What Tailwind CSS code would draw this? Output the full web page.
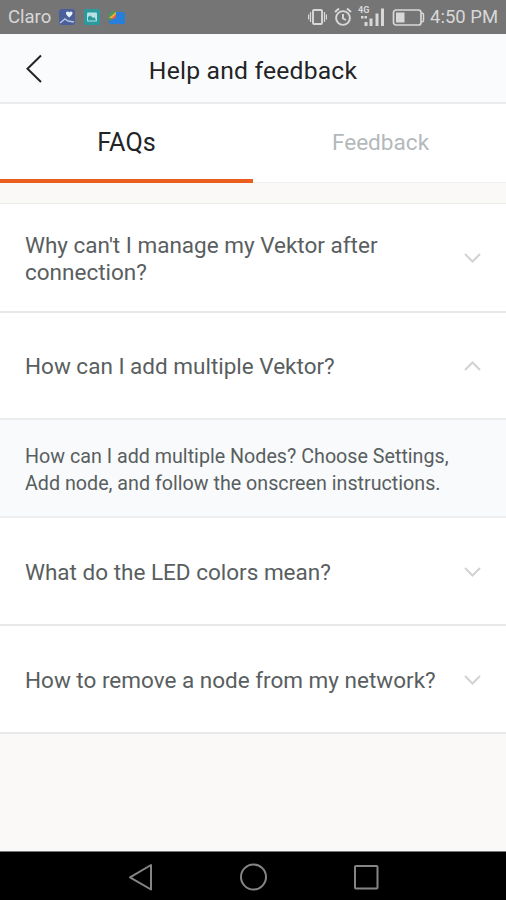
<!DOCTYPE html>
<html lang="en">
<head>
<meta charset="utf-8">
<title>Help and feedback</title>
<script src="https://cdn.jsdelivr.net/npm/@tailwindcss/browser@4"></script>
</head>
<body class="w-[506px] h-[900px] overflow-hidden flex flex-col bg-[#faf9f7] font-['Roboto',sans-serif] text-[#595e60]">
  <div class="h-[34px] shrink-0 bg-[#757575] flex items-center pl-2 pr-2 text-[#d8d8d8]">
    <span class="text-[18.5px] leading-[34px] w-[51px] whitespace-nowrap">Claro</span>
    <svg class="w-4 h-4" viewBox="0 0 16 16"><rect width="16" height="16" rx="3" fill="#4a5f9b"/><path d="M7 3.500q2-2 3.200 0 1.500-2 3.300 0 .5 2-3.300 5Q6.500 5.500 7 3.500z" fill="#e7f4fa"/><path d="M1 14l5-4 3 2 6 1" fill="none" stroke="#b6c3df" stroke-width="1.500"/></svg>
    <svg class="w-4 h-4 ml-[9px]" viewBox="0 0 16 16"><rect width="16" height="16" rx="2" fill="#2a9a9d"/><rect x="3" y="3.500" width="10" height="9" rx="1" fill="#b9e1e3"/><path d="M4 11.500V8l2.500-1.500L9 9l1.500-1 1.500 3.500z" fill="#2a9a9d"/></svg>
    <svg class="w-[17px] h-4 ml-[8px]" viewBox="0 0 17 16"><rect x="1" y="3" width="16" height="12" rx="1.500" fill="#287fd9"/><path d="M0 8a7 7 0 0 1 8-6v5l-6 5z" fill="#4f9a50"/><path d="M1 9l7-6v3L4 9z" fill="#f0b63d"/><path d="M3 10l5-5v3L6 10z" fill="#e75d49"/></svg>
    <div class="grow"></div>
    <svg class="w-[20px] h-[18px]" viewBox="0 0 20 18" fill="none" stroke="#d8d8d8" stroke-width="1.900"><rect x="6" y="2" width="9" height="14" rx="1"/><path d="M3.500 4v10M17.500 4v10M1.600 6.500v5M19.400 6.500v5" stroke-width="1.200"/></svg>
    <svg class="w-[18px] h-[20px] ml-[7px]" viewBox="0 0 18 20" fill="none" stroke="#d8d8d8" stroke-width="1.900"><circle cx="9" cy="11" r="6.900"/><path d="M9 7v4.500l3 1.500M1 5l4-3.500M17 5l-4-3.500"/></svg>
    <div class="relative w-[28px] h-[24px] ml-[5px]">
      <span class="absolute left-[1px] top-0 text-[9px] leading-[10px] font-bold">4G</span>
      <svg class="absolute inset-0" width="28" height="24" viewBox="0 0 28 24" fill="#d8d8d8"><path d="M7.500 17h3v4h-3zM12.500 13.500h3V21h-3zM18.500 8.500h3V21h-3zM24 3.500h3V21h-3zM4 11h2.500v2.500H4zM7.500 11H10v2.500H7.500z"/></svg>
    </div>
    <svg class="w-[33px] h-[17px] ml-[7px]" viewBox="0 0 33 17"><rect x="1.500" y="1" width="27.500" height="15" rx="2.500" fill="none" stroke="#d8d8d8" stroke-width="1.700"/><rect x="4" y="3.500" width="8.500" height="10" fill="#d8d8d8"/><path d="M29.500 4q2 0 2 2v5q0 2-2 2" fill="none" stroke="#d8d8d8" stroke-width="1.500"/></svg>
    <span class="text-[18.500px] leading-[34px] ml-[5px] w-[68px] whitespace-nowrap">4:50 PM</span>
  </div>
  <header class="relative h-[70px] shrink-0 bg-[#fafbfd] border-b-2 border-[#ebebed] flex items-center justify-center text-[#222426]">
    <svg class="absolute left-[25px] top-[20px]" width="18" height="30" viewBox="0 0 18 30" fill="none" stroke="#222426" stroke-width="2"><path d="M16 1.500L2.500 14.800 16 28"/></svg>
    <h1 class="text-[24.7px] leading-[30px] pt-[5px] whitespace-nowrap tracking-[0.2px]">Help and feedback</h1>
  </header>
  <nav class="h-[79px] shrink-0 flex bg-white">
    <div class="w-[253px] border-b-4 border-[#ea5f20] flex items-center justify-center pt-[3px] text-[25.2px] text-[#222426]"><span>FAQs</span></div>
    <div class="w-[253px] border-b border-[#f0efee] flex items-center justify-center pl-[2px] text-[22.6px] text-[#b3b9bb]"><span>Feedback</span></div>
  </nav>
  <main class="mt-5 border-t border-[#e9e9e8] text-[22.500px] leading-[27px]">
    <div class="h-[109px] bg-white border-b-2 border-[#e8e8e9] flex items-center justify-between pl-[25px] pr-[24px]">
      <span class="w-[400px] pt-[2px]">Why can't I manage my Vektor after<br>connection?</span>
      <svg width="19" height="12" viewBox="0 0 19 12" fill="none" stroke="#d2d2d2" stroke-width="2"><path d="M2 2l7.500 7.500L17 2"/></svg>
    </div>
    <div class="h-[107px] bg-white border-b-2 border-[#ebecec] flex items-center justify-between pl-[25px] pr-[24px]">
      <span class="pt-[2px]">How can I add multiple Vektor?</span>
      <svg width="19" height="12" viewBox="0 0 19 12" fill="none" stroke="#d2d2d2" stroke-width="2"><path d="M2 10l7.500-7.500L17 10"/></svg>
    </div>
    <div class="h-[98px] bg-[#f8fafc] border-b-2 border-[#efefef] pl-[25px] flex items-center text-[19.7px] leading-[27px] whitespace-nowrap">
      <span class="pt-[4px]">How can I add multiple Nodes? Choose Settings,<br>Add node, and follow the onscreen instructions.</span>
    </div>
    <div class="h-[108px] bg-white border-b-2 border-[#e8e8e9] flex items-center justify-between pl-[25px] pr-[24px]">
      <span class="pt-[2px]">What do the LED colors mean?</span>
      <svg class="mt-[2px]" width="19" height="12" viewBox="0 0 19 12" fill="none" stroke="#d2d2d2" stroke-width="2"><path d="M2 2l7.500 7.500L17 2"/></svg>
    </div>
    <div class="h-[108px] bg-white border-b-2 border-[#e8e8e9] flex items-center justify-between pl-[25px] pr-[24px]">
      <span class="pt-[2px] whitespace-nowrap">How to remove a node from my network?</span>
      <svg class="mt-[2px]" width="19" height="12" viewBox="0 0 19 12" fill="none" stroke="#d2d2d2" stroke-width="2"><path d="M2 2l7.500 7.500L17 2"/></svg>
    </div>
  </main>
  <footer class="mt-auto h-[49px] shrink-0 bg-black border-t border-[#777]">
    <svg width="506" height="48" viewBox="0 0 506 48" fill="none" stroke="#858585" stroke-width="2" stroke-linejoin="round"><path d="M130 25.300L151 13v24.500z"/><circle cx="253.500" cy="25" r="12.500"/><rect x="355" y="14" width="22.500" height="22.500" rx="1"/></svg>
  </footer>
</body>
</html>
